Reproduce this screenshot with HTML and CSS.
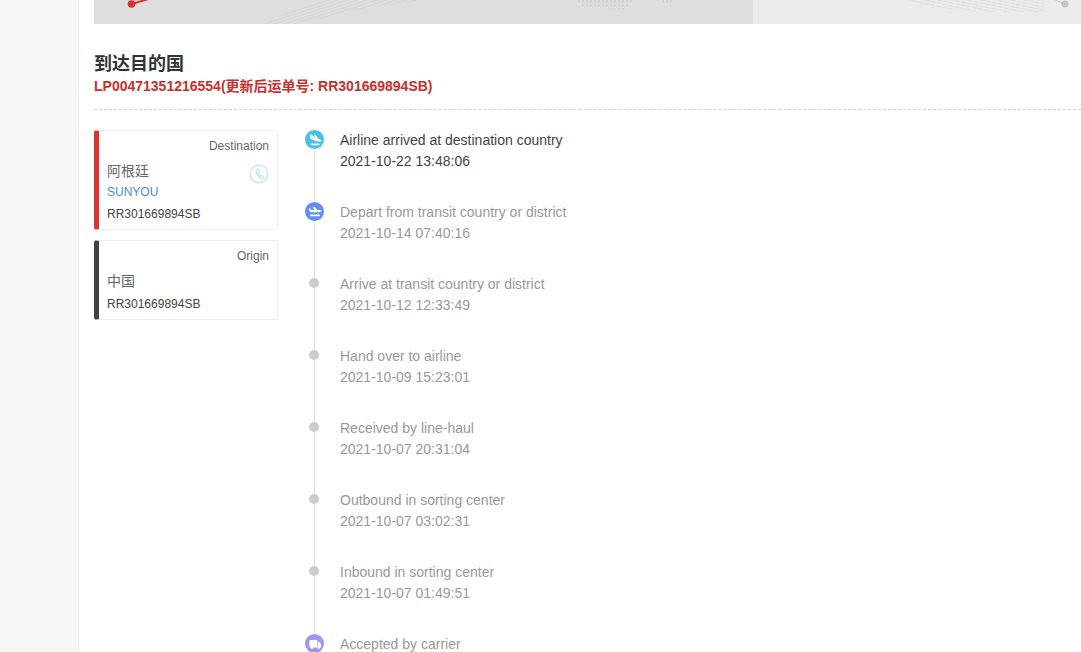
FILE: index.html
```html
<!DOCTYPE html>
<html lang="zh">
<head>
<meta charset="utf-8">
<title>Tracking</title>
<link rel="stylesheet" href="styles.css">
</head>
<body>
<div class="page">
  <aside class="side"></aside>
  <main class="main">
    <div class="map">
      <div class="map-left">
        <svg class="map-art" width="658" height="24" viewBox="0 0 658 24">
          <defs>
            <pattern id="hatch" width="5" height="3" patternUnits="userSpaceOnUse" patternTransform="rotate(-18)">
              <rect width="5" height="1" fill="#d7d7d7"/>
            </pattern>
            <pattern id="dots" width="4" height="4" patternUnits="userSpaceOnUse">
              <rect width="2" height="3" fill="#d3d3d3"/>
            </pattern>
          </defs>
          <path fill="url(#hatch)" d="M170 24 L200 10 L232 0 L330 0 L260 10 L205 24 Z"/>
          <path fill="url(#dots)" d="M482 0 L540 0 L532 9 L490 7 Z"/>
          <path fill="url(#dots)" d="M566 0 L580 0 L574 4 L568 4 Z"/>
          <path class="route" d="M37.5 4 L58 -2"/>
          <circle class="pin" cx="37.5" cy="4" r="3.8"/>
        </svg>
      </div>
      <div class="map-right">
        <svg class="map-art" width="329" height="24" viewBox="0 0 329 24">
          <defs>
            <pattern id="hatch2" width="6" height="3" patternUnits="userSpaceOnUse" patternTransform="rotate(12)">
              <rect width="5" height="1" fill="#e0e0e0"/>
            </pattern>
          </defs>
          <path fill="url(#hatch2)" d="M154 0 L292 0 L290 12 L240 12 L180 8 Z"/>
          <path class="route2" d="M300 -1 L312 4"/>
          <circle class="pin2" cx="312" cy="4" r="3.5"/>
        </svg>
      </div>
    </div>

    <h2 class="title">到达目的国</h2>
    <p class="sub">LP00471351216554(更新后运单号: RR301669894SB)</p>
    <div class="rule"></div>

    <div class="body">
      <div class="cards">
        <section class="card card-dest">
          <div class="role">Destination</div>
          <div class="country">阿根廷</div>
          <a class="carrier">SUNYOU</a>
          <div class="num">RR301669894SB</div>
          <svg class="phone" width="20" height="20" viewBox="0 0 20 20">
            <circle cx="10" cy="10" r="8.8"/>
            <path d="M7.8 5.4 L9.4 5.2 L10.3 8 L9.3 9 C9.8 10.6 10.6 11.6 12 12.4 L13 11.6 L14.4 13 L13.6 14.6 C11 15 7 10.2 7 7 Z"/>
          </svg>
        </section>
        <section class="card card-orig">
          <div class="role">Origin</div>
          <div class="country">中国</div>
          <div class="num">RR301669894SB</div>
        </section>
      </div>

      <ol class="timeline">
        <li class="step step-now">
          <span class="badge badge-sky">
            <svg width="16" height="16" viewBox="0 0 16 16"><path d="M2.5 2.5 L4.2 2.4 L8 5.2 L7.2 2.8 L8.8 3 L11 6.4 L13.2 7.4 C14.4 8 14.6 9.2 14 9.6 C13 10 11 9.6 9 9 L5 7.6 L3.4 6.6 L2.6 4.4 L3.6 4.4 Z"/><rect x="3.5" y="11.6" width="9" height="1.6" rx=".8"/></svg>
          </span>
          <div class="name">Airline arrived at destination country</div>
          <div class="time">2021-10-22 13:48:06</div>
        </li>
        <li class="step">
          <span class="badge badge-blue">
            <svg width="16" height="16" viewBox="0 0 16 16"><path d="M1.6 4.6 L3 4.4 L4.6 6 L7.4 6 L6 3 L7.6 3 L10.4 6 L13 6 C14.4 6 15 6.8 14.4 7.2 C13.8 7.8 12.4 8.2 11 8.2 L4.4 8.2 L2.6 7.2 Z"/><rect x="3" y="10.6" width="10" height="1.7" rx=".85"/></svg>
          </span>
          <div class="name">Depart from transit country or district</div>
          <div class="time">2021-10-14 07:40:16</div>
        </li>
        <li class="step"><span class="dot"></span><div class="name">Arrive at transit country or district</div><div class="time">2021-10-12 12:33:49</div></li>
        <li class="step"><span class="dot"></span><div class="name">Hand over to airline</div><div class="time">2021-10-09 15:23:01</div></li>
        <li class="step"><span class="dot"></span><div class="name">Received by line-haul</div><div class="time">2021-10-07 20:31:04</div></li>
        <li class="step"><span class="dot"></span><div class="name">Outbound in sorting center</div><div class="time">2021-10-07 03:02:31</div></li>
        <li class="step"><span class="dot"></span><div class="name">Inbound in sorting center</div><div class="time">2021-10-07 01:49:51</div></li>
        <li class="step step-last">
          <span class="badge badge-violet">
            <svg width="16" height="16" viewBox="0 0 16 16"><rect x="2.4" y="4" width="8" height="7.4" rx="1.2"/><path d="M11.2 6 H12.4 L14 8 V11.4 H11.2 Z"/><circle cx="5" cy="11.6" r="1.4"/><circle cx="11.6" cy="11.6" r="1.4"/></svg>
          </span>
          <div class="name">Accepted by carrier</div>
        </li>
      </ol>
    </div>
  </main>
</div>
</body>
</html>
```
FILE: styles.css
```css
* { box-sizing: border-box; }
html, body { margin: 0; height: 100%; overflow: hidden; background: #fff; }
body { font-family: "Liberation Sans", "Noto Sans CJK SC", Arial, sans-serif; font-size: 14px; color: #333; }

.page { display: flex; height: 652px; overflow: hidden; }
.side { width: 79px; flex: none; background: #f6f6f6; border-right: 1px solid #f0f0f0; }
.main { flex: 1; min-width: 0; padding-left: 15px; }

.map { display: flex; height: 24px; }
.map-left { width: 658px; flex: none; background: #dedede; }
.map-right { flex: 1; background: #ebebeb; border-left: 1px solid #e2e2e2; }
.map-art { display: block; overflow: hidden; }
.route { stroke: #e0312c; stroke-width: 2; fill: none; }
.pin { fill: #e0312c; }
.route2 { stroke: #cfcfcf; stroke-width: 1; fill: none; }
.pin2 { fill: #c4c4c4; }

.title { margin: 29px 0 0; font-size: 18px; line-height: 22px; font-weight: 700; color: #333; }
.sub { margin: 3px 0 0; font-size: 14px; line-height: 16px; font-weight: 700; color: #c9302c; }
.rule { margin-top: 15px; border-top: 1px dashed #d2d2d2; }

.body { display: flex; align-items: flex-start; margin-top: 20px; }
.cards { width: 184px; flex: none; display: flex; flex-direction: column; gap: 10px; }
.card { position: relative; border: 1px solid #eee; border-left: 5px solid; border-radius: 3px; padding: 8px 8px 0 8px; font-size: 12px; }
.card-dest { border-left-color: #dc3330; height: 100px; }
.card-orig { border-left-color: #424242; height: 80px; }
.role { text-align: right; line-height: 14px; color: #666; }
.country { margin-top: 8px; font-size: 14px; line-height: 20px; color: #666; }
.carrier { display: block; margin-top: 2px; line-height: 18px; color: #3f8fd8; }
.num { margin-top: 4px; line-height: 18px; color: #444; }
.phone { position: absolute; right: 8px; top: 33px; fill: none; stroke: #bfe2f5; stroke-width: 1.2; }

.timeline { list-style: none; margin: 0 0 0 36px; padding: 0; width: 500px; }
.step { position: relative; height: 72px; padding-left: 26px; color: #999; }
.step::before { content: ""; position: absolute; left: 0; top: 10px; bottom: -10px; width: 1px; background: #e0e0e0; }
.step-last::before { display: none; }
.name { line-height: 20px; }
.time { margin-top: 1px; line-height: 20px; }
.step-now { color: #444; }
.badge { position: absolute; left: -9px; top: 0; width: 19px; height: 19px; border-radius: 50%; display: flex; align-items: center; justify-content: center; }
.badge svg { fill: #fff; display: block; }
.badge-sky { background: #45c0f1; }
.badge-blue { background: #648ff2; }
.badge-violet { background: #a394ee; }
.dot { position: absolute; left: -5px; top: 4px; width: 10px; height: 10px; border-radius: 50%; background: #ccc; }
```
